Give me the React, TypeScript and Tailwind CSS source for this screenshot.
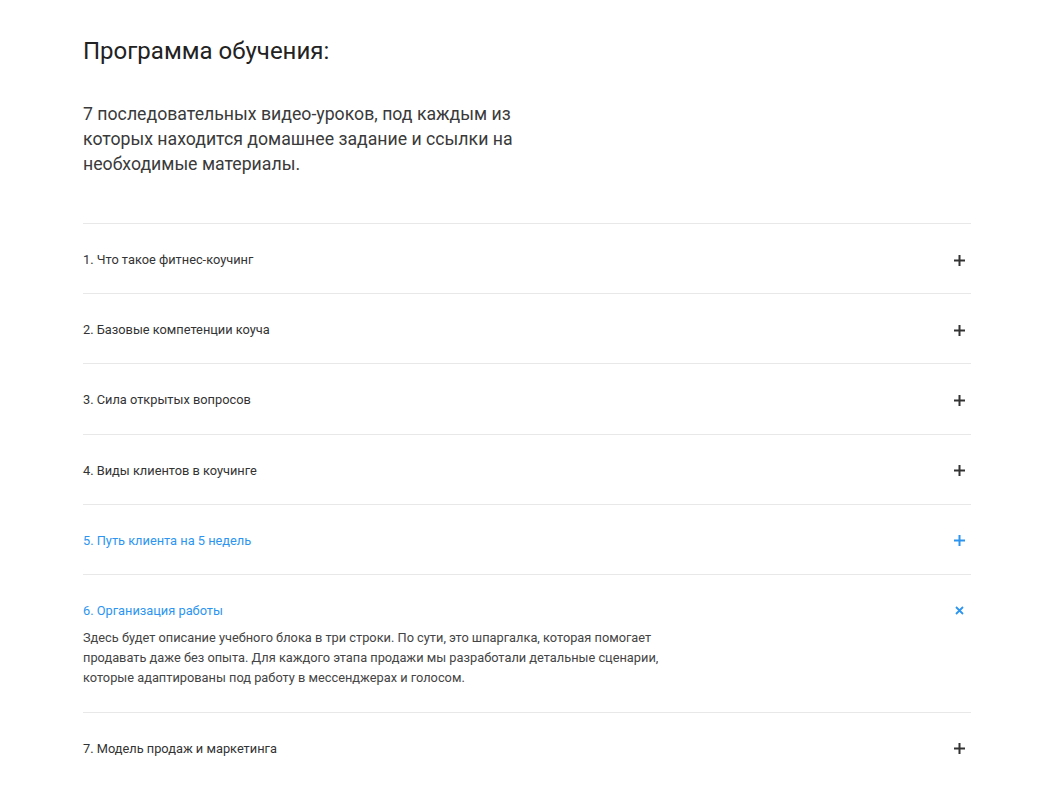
import React, { useState } from 'react';

const LESSONS = [
  { id: 1, title: '1. Что такое фитнес-коучинг' },
  { id: 2, title: '2. Базовые компетенции коуча' },
  { id: 3, title: '3. Сила открытых вопросов' },
  { id: 4, title: '4. Виды клиентов в коучинге' },
  { id: 5, title: '5. Путь клиента на 5 недель' },
  {
    id: 6,
    title: '6. Организация работы',
    text: 'Здесь будет описание учебного блока в три строки. По сути, это шпаргалка, которая помогает продавать даже без опыта. Для каждого этапа продажи мы разработали детальные сценарии, которые адаптированы под работу в мессенджерах и голосом.',
  },
  { id: 7, title: '7. Модель продаж и маркетинга' },
];

function PlusIcon({ className }: { className?: string }) {
  return (
    <svg width="11" height="11" viewBox="0 0 11 11" className={className}>
      <path d="M5.5 0v11M0 5.5h11" stroke="currentColor" strokeWidth="2" />
    </svg>
  );
}

function CloseIcon({ className }: { className?: string }) {
  return (
    <svg width="9" height="9" viewBox="0 0 9 9" className={className}>
      <path d="M1 1l7 7M8 1L1 8" stroke="currentColor" strokeWidth="1.8" />
    </svg>
  );
}

export default function App() {
  const [openId, setOpenId] = useState<number | null>(6);
  const hoverId = 5;

  return (
    <div className="min-h-screen bg-white font-['Roboto',sans-serif]">
      <div className="ml-[83px] w-[888px] pt-[37px]">
        {/* Header */}
        <h1 className="text-[24px] leading-[29px] text-[#222]">Программа обучения:</h1>
        <p className="mt-[36px] max-w-[440px] text-[17.7px] leading-[25px] text-[#3a3a3a]">
          7 последовательных видео-уроков, под каждым из которых находится домашнее задание и ссылки на необходимые материалы.
        </p>

        {/* Accordion */}
        <div className="mt-[46px]">
          {LESSONS.map((lesson) => {
            const isOpen = openId === lesson.id;
            const isBlue = isOpen || lesson.id === hoverId;
            return (
              <div key={lesson.id} className="border-t border-[#e8e8e8]">
                <button
                  onClick={() => setOpenId(isOpen ? null : lesson.id)}
                  className={`flex w-full items-center justify-between pt-[26px] text-left ${isOpen ? 'pb-0' : 'pb-[23.2px]'}`}
                >
                  <span className={`text-[12.8px] leading-[20px] ${isBlue ? 'text-[#2d95f0]' : 'text-[#333]'}`}>
                    {lesson.title}
                  </span>
                  <span className={`mr-[6px] flex h-[11px] w-[11px] items-center justify-center ${isBlue ? 'text-[#2d95f0]' : 'text-[#333]'}`}>
                    {isOpen ? <CloseIcon /> : <PlusIcon />}
                  </span>
                </button>
                {isOpen && lesson.text && (
                  <p className="mt-[7px] max-w-[590px] pb-[24px] text-[12.8px] leading-[20px] text-[#444]">{lesson.text}</p>
                )}
              </div>
            );
          })}
        </div>
      </div>
    </div>
  );
}
